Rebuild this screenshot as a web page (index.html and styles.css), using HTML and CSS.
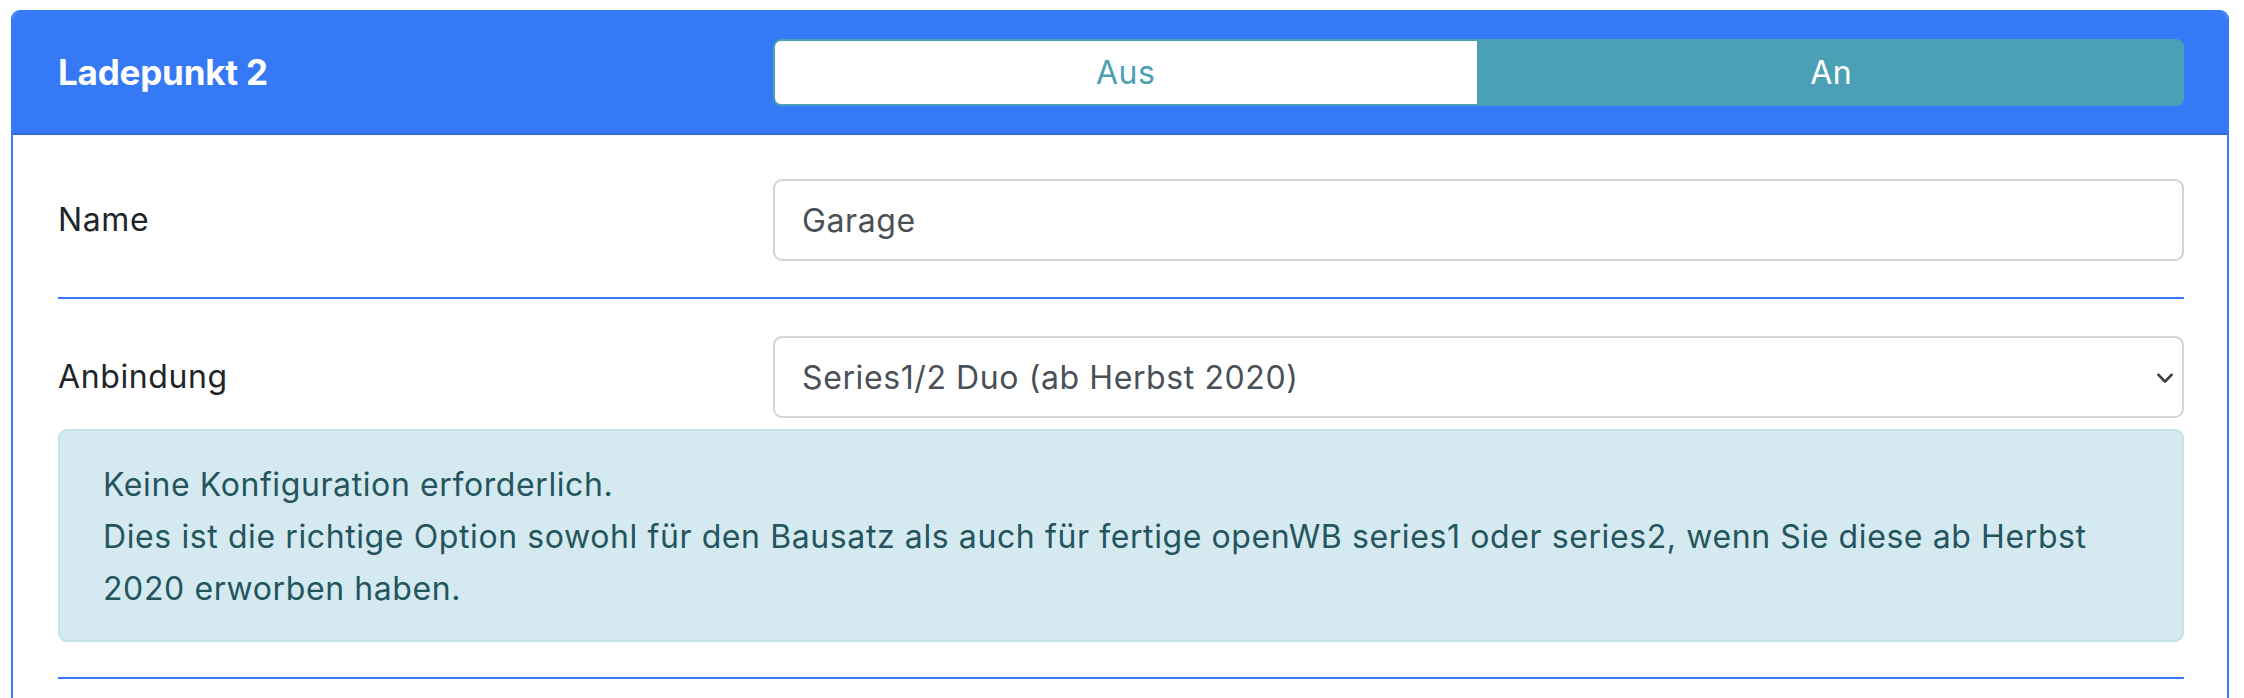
FILE: index.html
```html
<!DOCTYPE html>
<html lang="de">
<head>
<meta charset="utf-8">
<title>Ladepunkt 2</title>
<link rel="stylesheet" href="styles.css">
</head>
<body>
<div class="page">
  <section class="card">
    <header class="card-header">
      <h2 class="card-title">Ladepunkt 2</h2>
      <div class="toggle">
        <button class="toggle-btn toggle-off" type="button">Aus</button>
        <button class="toggle-btn toggle-on" type="button">An</button>
      </div>
    </header>
    <div class="card-body">
      <div class="form-row">
        <label class="form-label" for="name">Name</label>
        <input class="form-control" id="name" type="text" value="Garage">
      </div>
      <hr class="divider divider-mid">
      <div class="form-row">
        <label class="form-label">Anbindung</label>
        <div class="form-select">
          <span>Series1/2 Duo (ab Herbst 2020)</span>
          <svg class="chevron" width="16" height="11" viewBox="0 0 16 11" aria-hidden="true">
            <path d="M1.5 1.8 L8 8.6 L14.5 1.8" fill="none" stroke="#343a40" stroke-width="2.6" stroke-linecap="round" stroke-linejoin="round"/>
          </svg>
        </div>
      </div>
      <div class="alert-info">
        Keine Konfiguration erforderlich.<br>
        Dies ist die richtige Option sowohl für den Bausatz als auch für fertige openWB series1 oder series2, wenn Sie diese ab Herbst 2020 erworben haben.
      </div>
      <hr class="divider divider-end">
    </div>
  </section>
</div>
</body>
</html>
```

FILE: styles.css
```css
* {
  box-sizing: border-box;
}

html, body {
  margin: 0;
  padding: 0;
  background: #ffffff;
}

body {
  font-family: Inter, "Noto Sans", "Liberation Sans", sans-serif;
  color: #212529;
  font-size: 32px;
  letter-spacing: 0.6px;
  overflow: hidden;
}

.page {
  padding: 10px 15px 0 11px;
}

.card {
  border: 2px solid #3479f6;
  border-bottom: none;
  border-radius: 9px 9px 0 0;
  background: #ffffff;
  min-height: 720px;
}

.card-header {
  display: grid;
  grid-template-columns: 715px 1fr;
  align-items: center;
  background: #3579f6;
  border-bottom: 2px solid #2c6bd8;
  border-radius: 7px 7px 0 0;
  padding: 27px 43px 27px 45px;
}

.card-title {
  margin: 0;
  font-size: 35px;
  font-weight: 700;
  color: #ffffff;
  line-height: 1;
  letter-spacing: -0.2px;
}

.toggle {
  display: flex;
  height: 67px;
}

.toggle-btn {
  flex: 1 1 0;
  font-family: inherit;
  font-size: 32px;
  font-weight: 400;
  letter-spacing: 0.6px;
  margin: 0;
  cursor: pointer;
  line-height: 1;
}

.toggle-off {
  background: #ffffff;
  color: #4ba0b5;
  border: 2px solid #4ba0b5;
  border-radius: 8px 0 0 8px;
}

.toggle-on {
  background: #4ba0b5;
  color: #ffffff;
  border: 2px solid #4ba0b5;
  border-radius: 0 8px 8px 0;
}

.card-body {
  padding: 44px 43px 0 45px;
}

.form-row {
  display: grid;
  grid-template-columns: 715px 1fr;
  align-items: center;
}

.form-label {
  font-size: 32px;
  color: #212529;
  line-height: 1.5;
}

.form-control,
.form-select {
  height: 82px;
  width: 100%;
  border: 2px solid #d0d5da;
  border-radius: 9px;
  background: #ffffff;
  font-family: inherit;
  font-size: 32px;
  letter-spacing: 0.6px;
  color: #495057;
  padding: 0 26px 0 27px;
  margin: 0;
}

.form-select {
  display: flex;
  align-items: center;
  justify-content: space-between;
  padding-right: 9px;
}

.chevron {
  display: block;
  margin-top: 2px;
}

.divider {
  border: none;
  height: 2px;
  background: #3479f6;
  margin: 0;
}

.divider-mid {
  margin: 36px 0 37px;
}

.alert-info {
  margin-top: 11px;
  background: #d5eaf0;
  border: 2px solid #c4e3e9;
  border-radius: 9px;
  color: #24555f;
  font-size: 32px;
  line-height: 52px;
  padding: 28px 43px 25px 43px;
}

.divider-end {
  margin-top: 35px;
}
```
